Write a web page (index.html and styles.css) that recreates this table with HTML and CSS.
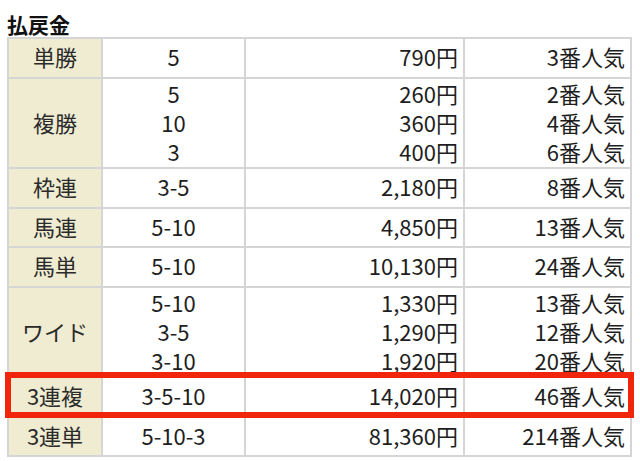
FILE: index.html
```html
<!DOCTYPE html>
<html lang="ja">
<head>
<meta charset="utf-8">
<title>払戻金</title>
<link rel="stylesheet" href="styles.css">
</head>
<body>
<div class="page">
  <h2 class="title">払戻金</h2>
  <div class="table-wrap">
    <table class="payout">
      <tbody>
        <tr class="single">
          <th class="w1">単勝</th>
          <td class="c w2">5</td>
          <td class="r w3">790円</td>
          <td class="r w4">3番人気</td>
        </tr>
        <tr class="multi">
          <th>複勝</th>
          <td class="c">5<br>10<br>3</td>
          <td class="r">260円<br>360円<br>400円</td>
          <td class="r">2番人気<br>4番人気<br>6番人気</td>
        </tr>
        <tr class="single">
          <th>枠連</th>
          <td class="c">3-5</td>
          <td class="r">2,180円</td>
          <td class="r">8番人気</td>
        </tr>
        <tr class="single short">
          <th>馬連</th>
          <td class="c">5-10</td>
          <td class="r">4,850円</td>
          <td class="r">13番人気</td>
        </tr>
        <tr class="single">
          <th>馬単</th>
          <td class="c">5-10</td>
          <td class="r">10,130円</td>
          <td class="r">24番人気</td>
        </tr>
        <tr class="multi">
          <th>ワイド</th>
          <td class="c">5-10<br>3-5<br>3-10</td>
          <td class="r">1,330円<br>1,290円<br>1,920円</td>
          <td class="r">13番人気<br>12番人気<br>20番人気</td>
        </tr>
        <tr class="single">
          <th>3連複</th>
          <td class="c">3-5-10</td>
          <td class="r">14,020円</td>
          <td class="r">46番人気</td>
        </tr>
        <tr class="single short">
          <th>3連単</th>
          <td class="c">5-10-3</td>
          <td class="r">81,360円</td>
          <td class="r">214番人気</td>
        </tr>
      </tbody>
    </table>
    <div class="highlight"></div>
  </div>
</div>
</body>
</html>
```

FILE: styles.css
```css
html, body {
  margin: 0;
  padding: 0;
  background: #ffffff;
}

body {
  font-family: "Noto Sans CJK JP", "Noto Sans", sans-serif;
  color: #1e1e1e;
}

.page {
  padding: 12px 0 0 7px;
}

.title {
  margin: 0;
  font-size: 21px;
  line-height: 25px;
  font-weight: bold;
  color: #111111;
}

.table-wrap {
  position: relative;
  display: inline-block;
}

.payout {
  border-collapse: separate;
  border-spacing: 0;
  border-top: 2px solid #d5d5d5;
  border-left: 2px solid #d5d5d5;
  font-size: 22px;
  line-height: 29px;
}

.payout th,
.payout td {
  box-sizing: border-box;
  border-right: 2px solid #d5d5d5;
  border-bottom: 2px solid #d5d5d5;
  padding: 0 5px 3px;
  vertical-align: middle;
  white-space: nowrap;
}

.payout th {
  background: #efecd2;
  font-weight: normal;
  text-align: center;
  color: #2a2a2a;
}

.single th,
.single td {
  height: 40px;
}

.single.short th,
.single.short td {
  height: 39px;
}

.multi th,
.multi td {
  height: 90px;
  padding-bottom: 1px;
}

.w1 { width: 94px; }
.w2 { width: 143px; }
.w3 { width: 219px; }
.w4 { width: 167px; }

.c { text-align: center; }
.r { text-align: right; }

.highlight {
  position: absolute;
  left: -2px;
  top: 335px;
  width: 629px;
  height: 46px;
  box-sizing: border-box;
  border: 6px solid #f0250c;
  pointer-events: none;
}
```
